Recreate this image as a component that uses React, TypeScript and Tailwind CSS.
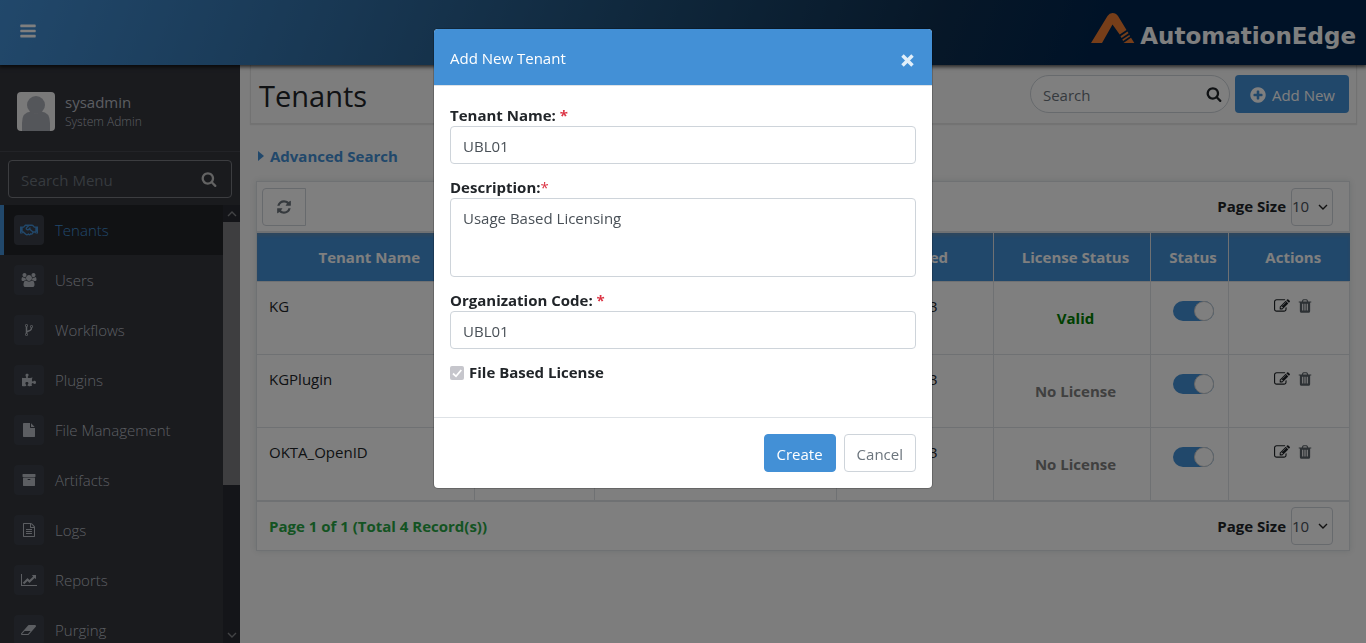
import React from 'react';
import { FaRegHandshake, FaPuzzlePiece } from 'react-icons/fa';

type IconProps = { d: string; w?: number; className?: string };

function Icon({ d, w = 1792, className = '' }: IconProps) {
  return (
    <svg viewBox={`0 0 ${w} 1792`} className={className} fill="currentColor" aria-hidden="true">
      <path d={d} />
    </svg>
  );
}

const BAR = 'v128q0 26-19 45t-45 19h-1408q-26 0-45-19t-19-45v-128q0-26 19-45t45-19h1408q26 0 45 19t19 45z';

const P = {
  bars: `M1664 1344${BAR}M1664 832${BAR}M1664 320${BAR}`,
  search:
    'M1216 832q0-185-131.5-316.5t-316.5-131.5-316.5 131.5-131.5 316.5 131.5 316.5 316.5 131.5 316.5-131.5 131.5-316.5zm512 832q0 52-38 90t-90 38q-54 0-90-38l-343-342q-179 124-399 124-143 0-273.5-55.5t-225-150-150-225-55.5-273.5 55.5-273.5 150-225 225-150 273.5-55.5 273.5 55.5 225 150 150 225 55.5 273.5q0 220-124 399l343 343q37 37 37 90z',
  plus:
    'M1344 960v-128q0-26-19-45t-45-19h-256v-256q0-26-19-45t-45-19h-128q-26 0-45 19t-19 45v256h-256q-26 0-45 19t-19 45v128q0 26 19 45t45 19h256v256q0 26 19 45t45 19h128q26 0 45-19t19-45v-256h256q26 0 45-19t19-45zm320-64q0 209-103 385.5t-279.5 279.5-385.5 103-385.5-103-279.5-279.5-103-385.5 103-385.5 279.5-279.5 385.5-103 385.5 103 279.5 279.5 103 385.5z',
  refresh:
    'M1639 1056q0 5-1 7-64 268-268 434.5t-478 166.5q-146 0-282.5-55t-243.5-157l-129 129q-19 19-45 19t-45-19-19-45v-448q0-26 19-45t45-19h448q26 0 45 19t19 45-19 45l-137 137q71 66 161 102t187 36q134 0 250-65t186-179q11-17 53-117 8-23 30-23h192q13 0 22.5 9.5t9.5 22.5zm25-800v448q0 26-19 45t-45 19h-448q-26 0-45-19t-19-45 19-45l138-138q-148-137-349-137-134 0-250 65t-186 179q-11 17-53 117-8 23-30 23h-199q-13 0-22.5-9.5t-9.5-22.5v-7q65-268 270-434.5t480-166.5q146 0 284 55.5t245 156.5l130-129q19-19 45-19t45 19 19 45z',
  edit:
    'M888 1184l116-116-152-152-116 116v56h96v96h56zm440-720q-16-16-33 1l-350 350q-17 17-1 33t33-1l350-350q17-17 1-33zm80 594v190q0 119-84.5 203.5t-203.5 84.5h-832q-119 0-203.5-84.5t-84.5-203.5v-832q0-119 84.5-203.5t203.5-84.5h832q63 0 117 25 15 7 18 23 3 17-9 29l-49 49q-14 14-32 8-23-6-45-6h-832q-66 0-113 47t-47 113v832q0 66 47 113t113 47h832q66 0 113-47t47-113v-126q0-13 9-22l64-64q15-15 35-7t20 29zm-96-738l288 288-672 672h-288v-288zm444 132l-92 92-288-288 92-92q28-28 68-28t68 28l152 152q28 28 28 68t-28 68z',
  trash:
    'M704 1376v-704q0-14-9-23t-23-9h-64q-14 0-23 9t-9 23v704q0 14 9 23t23 9h64q14 0 23-9t9-23zm256 0v-704q0-14-9-23t-23-9h-64q-14 0-23 9t-9 23v704q0 14 9 23t23 9h64q14 0 23-9t9-23zm256 0v-704q0-14-9-23t-23-9h-64q-14 0-23 9t-9 23v704q0 14 9 23t23 9h64q14 0 23-9t9-23zm-544-992h448l-48-117q-7-9-17-11h-317q-10 2-17 11zm928 32v64q0 14-9 23t-23 9h-96v948q0 83-47 143.5t-113 60.5h-832q-66 0-113-58.5t-47-141.5v-952h-96q-14 0-23-9t-9-23v-64q0-14 9-23t23-9h309l70-167q15-37 54-63t79-26h320q40 0 79 26t54 63l70 167h309q14 0 23 9t9 23z',
  users:
    'M657 896q-162 5-265 128h-134q-82 0-138-40.5t-56-118.5q0-353 124-353 6 0 43.5 21t97.5 42.5 119 21.5q67 0 133-23-5 37-5 66 0 139 81 256zm1071 637q0 120-73 189.5t-194 69.5h-874q-121 0-194-69.5t-73-189.5q0-53 3.5-103.5t14-109 26.5-108.5 43-97.5 62-81 85.5-53.5 111.5-20q10 0 43 21.5t73 48 107 48 135 21.5 135-21.5 107-48 73-48 43-21.5q61 0 111.5 20t85.5 53.5 62 81 43 97.5 26.5 108.5 14 109 3.5 103.5zm-1024-1277q0 106-75 181t-181 75-181-75-75-181 75-181 181-75 181 75 75 181zm704 384q0 159-112.5 271.5t-271.5 112.5-271.5-112.5-112.5-271.5 112.5-271.5 271.5-112.5 271.5 112.5 112.5 271.5zm576 225q0 78-56 118.5t-138 40.5h-134q-103-123-265-128 81-117 81-256 0-29-5-66 66 23 133 23 59 0 119-21.5t97.5-42.5 43.5-21q124 0 124 353zm-128-609q0 106-75 181t-181 75-181-75-75-181 75-181 181-75 181 75 75 181z',
  fork:
    'M672 1472q0-40-28-68t-68-28-68 28-28 68 28 68 68 28 68-28 28-68zm0-1152q0-40-28-68t-68-28-68 28-28 68 28 68 68 28 68-28 28-68zm640 128q0-40-28-68t-68-28-68 28-28 68 28 68 68 28 68-28 28-68zm96 0q0 52-26 96.5t-70 69.5q-2 287-226 414-67 38-203 81-128 40-169.5 71t-41.5 100v26q44 25 70 69.5t26 96.5q0 80-56 136t-136 56-136-56-56-136q0-52 26-96.5t70-69.5v-820q-44-25-70-69.5t-26-96.5q0-80 56-136t136-56 136 56 56 136q0 52-26 96.5t-70 69.5v497q54-26 154-57 55-17 87.5-29.5t70.5-31 59-39.5 40.5-51 28-69.5 8.5-91.5q-44-25-70-69.5t-26-96.5q0-80 56-136t136-56 136 56 56 136z',
  file:
    'M1152 512v-472q22 14 36 28l408 408q14 14 28 36h-472zm-128 32q0 40 28 68t68 28h544v1056q0 40-28 68t-68 28h-1344q-40 0-68-28t-28-68v-1600q0-40 28-68t68-28h800v544z',
  archive:
    'M1088 832q0-26-19-45t-45-19h-256q-26 0-45 19t-19 45 19 45 45 19h256q26 0 45-19t19-45zm576-192v960q0 26-19 45t-45 19h-1408q-26 0-45-19t-19-45v-960q0-26 19-45t45-19h1408q26 0 45 19t19 45zm64-448v256q0 26-19 45t-45 19h-1536q-26 0-45-19t-19-45v-256q0-26 19-45t45-19h1536q26 0 45 19t19 45z',
  fileText:
    'M1596 380q28 28 48 76t20 88v1152q0 40-28 68t-68 28h-1344q-40 0-68-28t-28-68v-1600q0-40 28-68t68-28h896q40 0 88 20t76 48zm-444-244v376h376q-10-29-22-41l-313-313q-12-12-41-22zm384 1528v-1024h-416q-40 0-68-28t-28-68v-416h-768v1536h1280zm-1024-864q0-14 9-23t23-9h704q14 0 23 9t9 23v64q0 14-9 23t-23 9h-704q-14 0-23-9t-9-23v-64zm736 224q14 0 23 9t9 23v64q0 14-9 23t-23 9h-704q-14 0-23-9t-9-23v-64q0-14 9-23t23-9h704zm0 256q14 0 23 9t9 23v64q0 14-9 23t-23 9h-704q-14 0-23-9t-9-23v-64q0-14 9-23t23-9h704z',
  chart:
    'M2048 1536v128h-2048v-1536h128v1408h1920zm-128-1248v435q0 21-19.5 29.5t-35.5-7.5l-121-121-633 633q-10 10-23 10t-23-10l-233-233-416 416-192-192 585-585q10-10 23-10t23 10l233 233 464-464-121-121q-16-16-7.5-35.5t29.5-19.5h435q14 0 23 9t9 23z',
  eraser:
    'M832 1408l336-384h-768l-336 384h768zm1013-1077q15 34 9.5 71.5t-30.5 65.5l-896 1024q-38 44-96 44h-768q-38 0-69.5-20.5t-47.5-54.5q-15-34-9.5-71.5t30.5-65.5l896-1024q38-44 96-44h768q38 0 69.5 20.5t47.5 54.5z',
};

const menu: { label: string; icon: React.ReactNode }[] = [
  { label: 'Tenants', icon: <FaRegHandshake className="h-4 w-[18px]" /> },
  { label: 'Users', icon: <Icon d={P.users} w={2048} className="h-[14px] w-4" /> },
  { label: 'Workflows', icon: <Icon d={P.fork} className="size-[14px]" /> },
  { label: 'Plugins', icon: <FaPuzzlePiece className="size-[14px]" /> },
  { label: 'File Management', icon: <Icon d={P.file} className="size-[14px]" /> },
  { label: 'Artifacts', icon: <Icon d={P.archive} className="size-[14px]" /> },
  { label: 'Logs', icon: <Icon d={P.fileText} className="size-[14px]" /> },
  { label: 'Reports', icon: <Icon d={P.chart} w={2048} className="h-[14px] w-4" /> },
  { label: 'Purging', icon: <Icon d={P.eraser} w={1920} className="h-[14px] w-4" /> },
];

const tenants = [
  { name: 'KG', created: '16-Mar-2023', license: 'Valid' },
  { name: 'KGPlugin', created: '16-Mar-2023', license: 'No License' },
  { name: 'OKTA_OpenID', created: '16-Mar-2023', license: 'No License' },
];

function Chevron({ up = false, className = '' }: { up?: boolean; className?: string }) {
  return (
    <svg viewBox="0 0 10 6" className={className} fill="none" stroke="currentColor" strokeWidth="1.4" aria-hidden="true">
      <path d={up ? 'M1 5l4-4 4 4' : 'M1 1l4 4 4-4'} />
    </svg>
  );
}

function Header() {
  return (
    <header className="relative z-10 flex h-[65px] shrink-0 items-center justify-between bg-linear-[110deg,#4390d6_0%,#316fa6_25%,#1e4d75_48%,#0e2f50_68%,#00254f_80%] pr-[10px] pl-[19px] shadow-[0_1px_4px_1px_rgba(0,0,0,0.7)]">
      <button type="button" aria-label="Toggle menu" className="-mt-1 text-white">
        <Icon d={P.bars} className="size-[18px]" />
      </button>
      <a href="#home" className="flex items-center gap-[5px]" aria-label="AutomationEdge">
        <svg viewBox="0 0 44 31" className="-mt-2 h-[31px] w-11" fill="#ef7d32" aria-hidden="true">
          <path d="M0 30L16.500 3Q18.500 0 21.500 0Q25 0 27 3L35.500 17L28.700 21.500L21.500 11.500L11 30Z" />
          <path d="M29.500 23.300L36.500 18.600L37.500 20.300L30.500 25Z" />
          <path d="M31.300 26.600L38.300 21.900L39.100 23.200L32.100 27.900Z" />
          <path d="M32.500 30L40 24.700L43.300 30Z" />
        </svg>
        <span className="pt-[6px] font-['DejaVu_Sans'] text-[23px] leading-8 font-bold text-white">AutomationEdge</span>
      </a>
    </header>
  );
}

function Sidebar() {
  return (
    <aside className="flex w-60 shrink-0 flex-col bg-[#34363d] font-light text-[#b8bcc4]">
      <div className="flex h-[87px] items-center gap-[10px] border-b border-[#44474f] pt-[6px] pl-[17px]">
        <svg viewBox="0 0 38 39" className="h-[39px] w-[38px] rounded-[4px]" aria-hidden="true">
          <rect width="38" height="39" fill="#f2f2f2" />
          <path d="M5 39v-8q0-11 9-11.500q5 4 10 0q9 .5 9 11.500v8z" fill="#a9adb5" />
          <circle cx="19" cy="13" r="9" fill="#a9adb5" />
        </svg>
        <div className="pt-[2px]">
          <div className="text-[15px] leading-5 font-normal">sysadmin</div>
          <div className="text-xs leading-5">System Admin</div>
        </div>
      </div>
      <div className="px-2 pt-2 pb-[7px]">
        <div className="flex h-[38px] items-center rounded-[4px] border border-[#797b81] pr-[14px] pl-3">
          <input
            type="text"
            aria-label="Search Menu"
            placeholder="Search Menu"
            className="w-full min-w-0 bg-transparent pt-[2px] text-[15px] font-normal outline-none placeholder:text-[#6c757d]"
          />
          <Icon d={P.search} className="size-4 shrink-0 text-[#c6c6c6]" />
        </div>
      </div>
      <div className="flex min-h-0 flex-1">
        <nav className="flex-1 overflow-hidden">
          {menu.map((m, i) => (
            <a
              key={m.label}
              href={'#' + m.label.toLowerCase().replace(' ', '-')}
              className={
                'flex h-[50px] items-center gap-[11px] border-l-4 pl-[10px] text-[15px] ' +
                (i === 0 ? 'border-[#4390d6] bg-[#222428] text-[#4390d6]' : 'border-transparent')
              }
            >
              <span className="flex size-[30px] items-center justify-center rounded-[4px] bg-[#3a3f48]">{m.icon}</span>
              {m.label}
            </a>
          ))}
        </nav>
        <div className="flex w-[17px] flex-col items-center bg-[#282a32] text-[#85878b]" aria-hidden="true">
          <div className="flex h-[17px] items-center">
            <Chevron up className="h-[6px] w-[10px]" />
          </div>
          <div className="h-3/5 w-full bg-[#7c7d80]" />
          <div className="mt-auto flex h-[17px] items-center">
            <Chevron className="h-[6px] w-[10px]" />
          </div>
        </div>
      </div>
    </aside>
  );
}

function PageSize({ id }: { id: string }) {
  return (
    <div className="flex items-center gap-[5px]">
      <label htmlFor={id} className="text-[15px] font-bold">
        Page Size
      </label>
      <div className="relative">
        <select
          id={id}
          defaultValue="10"
          className="h-[38px] w-[42px] appearance-none rounded-[4px] border border-[#ced4da] bg-transparent text-[15px] text-[#495057]"
        >
          <option>10</option>
        </select>
        <Chevron className="pointer-events-none absolute top-4 right-[5px] h-[6px] w-[10px] text-[#222]" />
      </div>
    </div>
  );
}

function TenantTable() {
  const heads = ['Tenant Name', '', '', 'Created', 'License Status', 'Status', 'Actions'];
  return (
    <table className="w-full table-fixed border-collapse text-[15px]">
      <colgroup>
        <col className="w-[217px]" />
        <col className="w-[120px]" />
        <col className="w-[242px]" />
        <col className="w-[157px]" />
        <col className="w-[157px]" />
        <col className="w-[78px]" />
        <col className="w-[122px]" />
      </colgroup>
      <thead>
        <tr className="h-12 bg-[#4390d6] text-white shadow-[inset_0_3px_3px_rgba(120,140,160,0.5)]">
          {heads.map((h, i) => (
            <th key={i} className="border-r border-[#dee2e6] pl-2 font-bold last:border-r-0">
              {h}
            </th>
          ))}
        </tr>
      </thead>
      <tbody>
        {tenants.map((t) => (
          <tr key={t.name} className="h-[73px] align-top leading-6 [&>td]:border-t [&>td]:border-r [&>td]:border-[#dee2e6] [&>td]:py-3 [&>td:last-child]:border-r-0">
            <td className="px-3">{t.name}</td>
            <td />
            <td />
            <td className="px-3 whitespace-nowrap">{t.created}</td>
            <td className={'pl-2 text-center align-middle font-bold ' + (t.license === 'Valid' ? 'text-[#008000]' : 'text-[#808080]')}>
              {t.license}
            </td>
            <td className="px-3">
              <label className="ml-[10px] flex h-[34px] items-center">
                <input type="checkbox" defaultChecked aria-label={'Status of ' + t.name} className="peer sr-only" />
                <span className="flex h-5 w-[41px] justify-end rounded-full bg-[#4390d6]">
                  <span className="size-5 rounded-full border border-[#ccc] bg-white" />
                </span>
              </label>
            </td>
            <td className="pl-2">
              <div className="flex h-6 items-center justify-center gap-[7px]">
                <button type="button" aria-label={'Edit ' + t.name}>
                  <Icon d={P.edit} className="size-4" />
                </button>
                <button type="button" aria-label={'Delete ' + t.name} className="text-[#5a6268]">
                  <Icon d={P.trash} className="size-4" />
                </button>
              </div>
            </td>
          </tr>
        ))}
      </tbody>
    </table>
  );
}

function Main() {
  return (
    <main className="min-w-0 flex-1 bg-[#fafafa]">
      <div className="mr-[9px] ml-[10px] flex h-[59px] items-center justify-between border-x border-b border-[#e4e4e4] pr-[7px] pl-2 shadow-[0_1px_1px_rgba(0,0,0,0.08)]">
        <h1 className="pt-1 text-[29px] leading-10">Tenants</h1>
        <div className="flex gap-[5px]">
          <div className="flex h-[38px] w-[200px] items-center rounded-full border border-[#ced4da] bg-white pr-[7px] pl-3">
            <input
              type="text"
              aria-label="Search"
              placeholder="Search"
              className="w-full min-w-0 bg-transparent pt-[2px] text-[15px] outline-none placeholder:text-[#6c757d]"
            />
            <Icon d={P.search} className="size-4 shrink-0" />
          </div>
          <button type="button" className="flex h-[38px] items-center gap-[5px] rounded-[4px] bg-[#4390d6] px-[14px] pt-[2px] text-[15px] text-white">
            <Icon d={P.plus} className="size-[18px]" />
            Add New
          </button>
        </div>
      </div>
      <div className="px-4 pt-[19px]">
        <button type="button" className="mb-3 flex h-[26px] items-center gap-[6px] pl-[2px] text-[15px] font-bold text-[#4390d6]">
          <svg viewBox="0 0 6 10" className="h-[10px] w-[6px]" fill="currentColor" aria-hidden="true">
            <path d="M0 0l6 5-6 5z" />
          </svg>
          Advanced Search
        </button>
        <section className="border border-[#dee2e6] bg-white shadow-[0_0_6px_rgba(0,60,60,0.12)]">
          <div className="flex h-[51px] items-center justify-between border-b-2 border-[#dee2e6] pr-4 pl-[5px]">
            <button type="button" aria-label="Refresh" className="flex h-[38px] w-11 items-center justify-center rounded-l-[4px] border border-[#ced4da] text-[#6c757d]">
              <Icon d={P.refresh} className="size-4" />
            </button>
            <PageSize id="size-top" />
          </div>
          <TenantTable />
          <div className="flex h-[50px] items-center justify-between border-t-2 border-[#dee2e6] pr-4 pl-3">
            <span className="text-[15px] font-bold text-[#28a745]">Page 1 of 1 (Total 4 Record(s))</span>
            <PageSize id="size-bottom" />
          </div>
        </section>
      </div>
    </main>
  );
}

function TenantDialog() {
  const field = 'block w-full rounded-[4px] border border-[#ced4da] bg-white px-3 text-[15px] text-[#495057]';
  return (
    <div className="fixed inset-0 z-20 bg-black/50">
      <div role="dialog" aria-modal="true" aria-labelledby="dialog-title" className="mx-auto mt-7 max-w-[500px] rounded-[5px] border border-black/20 bg-white bg-clip-padding">
        <div className="flex h-[57px] items-center justify-between rounded-t-[4px] border-b border-[#dee2e6] bg-[#4390d6] px-4 text-white">
          <h2 id="dialog-title" className="pt-[2px] text-[15px]">
            Add New Tenant
          </h2>
          <button type="button" aria-label="Close" className="mt-[6px] mr-[2px] text-[#e2effa]">
            <svg viewBox="0 0 13 13" className="size-[13px]" stroke="currentColor" strokeWidth="3.500" aria-hidden="true">
              <path d="M1.500 1.500l10 10M11.500 1.500l-10 10" />
            </svg>
          </button>
        </div>
        <form className="px-4 pt-[18px]" onSubmit={(e) => e.preventDefault()}>
          <div className="mb-3">
            <label htmlFor="tenant-name" className="block text-[15px] leading-[22px] font-bold">
              Tenant Name: <span className="text-[#dc3545]">*</span>
            </label>
            <input id="tenant-name" type="text" defaultValue="UBL01" className={field + ' h-[38px] pt-[2px]'} />
          </div>
          <div className="mb-3">
            <label htmlFor="description" className="block text-[15px] leading-[22px] font-bold">
              Description:<span className="font-normal text-[#dc3545]">*</span>
            </label>
            <textarea id="description" defaultValue="Usage Based Licensing" className={field + ' h-[79px] resize-none py-[7px] leading-6'} />
          </div>
          <div className="mb-3">
            <label htmlFor="org-code" className="block text-[15px] leading-[22px] font-bold">
              Organization Code: <span className="text-[#dc3545]">*</span>
            </label>
            <input id="org-code" type="text" defaultValue="UBL01" className={field + ' h-[38px] pt-[2px]'} />
          </div>
          <div className="flex h-6 items-center gap-[5px]">
            <span className="relative flex">
              <input id="file-license" type="checkbox" checked disabled readOnly className="size-[14px] appearance-none rounded-[2px] bg-[#c6c6cc]" />
              <svg viewBox="0 0 14 14" className="pointer-events-none absolute inset-0 size-[14px]" fill="none" stroke="white" strokeWidth="1.800" aria-hidden="true">
                <path d="M3 7.500l3 2.800 5.300-6.300" />
              </svg>
            </span>
            <label htmlFor="file-license" className="pb-[2px] text-[15px] font-bold">
              File Based License
            </label>
          </div>
        </form>
        <div className="mt-8 flex justify-end gap-2 border-t border-[#dee2e6] p-4 text-[15px]">
          <button type="button" className="h-[38px] rounded-[4px] border border-[#4390d6] bg-[#4390d6] px-3 pt-[2px] text-white">
            Create
          </button>
          <button type="button" className="h-[38px] rounded-[4px] border border-[#ced4da] bg-white px-3 pt-[2px] text-[#6c757d]">
            Cancel
          </button>
        </div>
      </div>
    </div>
  );
}

export default function App() {
  return (
    <div className="flex h-screen flex-col overflow-hidden font-['Open_Sans','Noto_Sans',sans-serif] text-[#212529]">
      <Header />
      <div className="flex min-h-0 flex-1">
        <Sidebar />
        <Main />
      </div>
      <TenantDialog />
    </div>
  );
}
